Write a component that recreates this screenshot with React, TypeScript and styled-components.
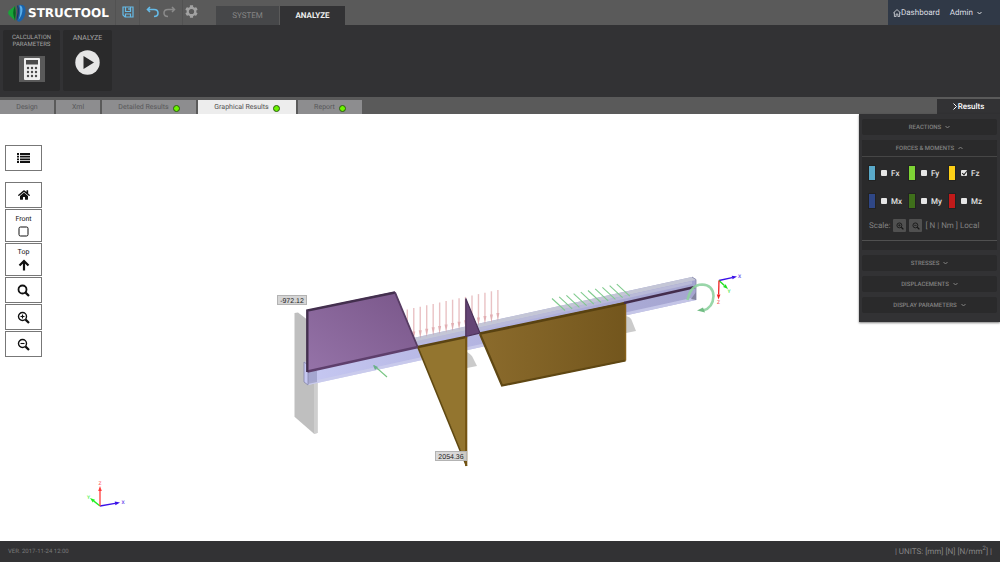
import React from "react";
import styled, { createGlobalStyle } from "styled-components";
import { FaHome, FaCog } from "react-icons/fa";

const GlobalStyle = createGlobalStyle`
  *, *::before, *::after { box-sizing: border-box; }
  body { margin: 0; background: #fff; font-family: Roboto, "Liberation Sans", sans-serif; font-size: 8px; text-rendering: geometricPrecision; }
  button { font: inherit; color: inherit; border: 0; padding: 0; background: none; cursor: pointer; text-rendering: inherit; }
  a { color: inherit; text-decoration: none; }
  svg { display: block; }
`;

const Page = styled.div`
  display: flex;
  flex-direction: column;
  min-height: 100vh;
`;

const TopBar = styled.header`
  display: flex;
  height: 25px;
  background: #5a5a5a;
`;

const Brand = styled.a`
  display: flex;
  align-items: center;
  gap: 2px;
  width: 115px;
  padding-left: 8px;
  color: #fff;
  font: bold 12px "DejaVu Sans", sans-serif;
`;

const ToolGroup = styled.div<{ $width: number }>`
  display: flex;
  align-items: center;
  justify-content: center;
  gap: 4px;
  width: ${(p) => p.$width}px;
  border-left: 1px solid #525252;
`;

const IconButton = styled.button<{ $color: string }>`
  color: ${(p) => p.$color};
  padding-bottom: 2px;
`;

const MainTabs = styled.nav`
  display: flex;
  align-items: flex-end;
  gap: 1px;
  margin-left: 17px;
`;

const MainTab = styled.button<{ $active?: boolean }>`
  width: ${(p) => (p.$active ? 65 : 63)}px;
  height: 19px;
  font-size: 8px;
  font-weight: ${(p) => (p.$active ? 700 : 400)};
  color: ${(p) => (p.$active ? "#eee" : "#858585")};
  background: ${(p) => (p.$active ? "#323234" : "#464749")};
`;

const UserArea = styled.div`
  display: flex;
  align-items: center;
  gap: 10px;
  width: 112px;
  margin-left: auto;
  padding-left: 5px;
  background: #303947;
  color: #dcdee2;
`;

const UserLink = styled.a`
  display: flex;
  align-items: center;
`;

const UserMenu = styled.button`
  display: flex;
  align-items: center;
  gap: 4px;
`;

const Ribbon = styled.div`
  display: flex;
  gap: 3px;
  height: 72px;
  padding: 5px 3px 6px;
  background: #323234;
`;

const RibbonCard = styled.button<{ $width: number }>`
  display: flex;
  flex-direction: column;
  align-items: center;
  justify-content: flex-start;
  gap: 8px;
  width: ${(p) => p.$width}px;
  padding-top: 4px;
  border-radius: 2px;
  background: #2a2a2b;
  color: #a4a4a4;
  font-size: 6px;
  line-height: 7px;
`;

const WideLabel = styled.span`
  font-size: 7px;
  line-height: 8px;
`;

const CalcTile = styled.span`
  padding: 2px 5px;
  background: #5a5a5a;
`;

const ViewTabs = styled.nav`
  display: flex;
  align-items: flex-end;
  gap: 2px;
  height: 17px;
  background: #5a5a5a;
`;

const ViewTab = styled.button<{ $width: number; $active?: boolean }>`
  display: flex;
  align-items: center;
  justify-content: center;
  gap: 4px;
  width: ${(p) => p.$width}px;
  height: 14px;
  font-size: 7px;
  background: ${(p) => (p.$active ? "#ededed" : "#8d8d8f")};
  color: ${(p) => (p.$active ? "#505050" : "#58585a")};
`;

const StatusDot = styled.i`
  width: 7px;
  height: 7px;
  margin-top: 2px;
  border: 1px solid #2c5a12;
  border-radius: 50%;
  background: #6cf500;
`;

const ResultsTab = styled.button`
  display: flex;
  align-items: center;
  justify-content: center;
  gap: 1px;
  width: 63px;
  height: 15px;
  margin-left: auto;
  background: #323234;
  color: #fff;
  font-weight: 500;
`;

const Stage = styled.main`
  position: relative;
  flex: 1;
  display: flex;
  justify-content: space-between;
  align-items: flex-start;
  min-height: 427px;
`;

const Scene = styled.svg`
  position: absolute;
  inset: 0;
  width: 100%;
  height: 100%;
`;

const ViewTools = styled.div`
  position: relative;
  display: flex;
  flex-direction: column;
  gap: 1px;
  width: 42px;
  padding: 31px 0 0 5px;
`;

const ViewTool = styled.button<{ $tall?: boolean; $apart?: boolean }>`
  display: flex;
  flex-direction: column;
  align-items: center;
  justify-content: center;
  gap: 2px;
  height: ${(p) => (p.$tall ? 33 : 26)}px;
  margin-bottom: ${(p) => (p.$apart ? 10 : 0)}px;
  border: 1px solid #777;
  background: #fff;
  color: #111;
  font-size: 7px;
  line-height: 9px;
`;

const Panel = styled.aside`
  position: relative;
  display: flex;
  flex-direction: column;
  gap: 5px;
  width: 141px;
  padding: 5px 3px 9px;
  background: #323234;
  box-shadow: 0 1px 2px rgba(0, 0, 0, 0.5);
  color: #828282;
`;

const SectionHead = styled.button`
  display: flex;
  align-items: center;
  justify-content: center;
  gap: 4px;
  width: 100%;
  height: 16px;
  border-radius: 2px;
  background: #2a2a2b;
  font-size: 6px;
  font-weight: 500;
`;

const OpenSection = styled.section`
  background: #2a2a2b;
`;

const OpenBody = styled.div`
  padding: 9px 0 9px 7px;
  border-top: 1px solid #464646;
`;

const ForceGrid = styled.div`
  display: grid;
  grid-template-columns: repeat(3, 40px);
  row-gap: 14px;
`;

const Force = styled.label`
  display: flex;
  align-items: center;
  height: 14px;
  color: #e4e4e4;
  font-weight: 500;
`;

const Swatch = styled.i<{ $color: string }>`
  width: 6px;
  height: 14px;
  margin-right: 6px;
  box-shadow: 0 0 0 1px #222;
  background: ${(p) => p.$color};
`;

const Check = styled.input`
  appearance: none;
  position: relative;
  width: 6px;
  height: 6px;
  margin: 0 4px 0 0;
  border-radius: 1px;
  background: #e6e6e6;
  &:checked::after {
    content: "";
    position: absolute;
    left: 2px;
    top: 0;
    width: 3px;
    height: 5px;
    border: solid #222;
    border-width: 0 1px 1px 0;
    transform: rotate(40deg);
  }
`;

const ScaleRow = styled.div`
  display: flex;
  align-items: center;
  gap: 3px;
  margin-top: 11px;
  padding-bottom: 8px;
  margin-left: -7px;
  padding-left: 7px;
  border-bottom: 1px solid #505050;
`;

const ScaleButton = styled.button`
  display: grid;
  place-items: center;
  width: 13px;
  height: 13px;
  border-radius: 1px;
  background: #505050;
  color: #161616;
`;

const ScaleButtons = styled.span`
  display: flex;
  gap: 3px;
`;

const Footer = styled.footer`
  display: flex;
  align-items: center;
  justify-content: space-between;
  height: 21px;
  padding: 0 8px;
  background: #323234;
  color: #858585;
`;

const Version = styled.span`
  color: #7a7a7a;
  font-size: 6px;
`;

const Units = styled.span`
  sup { font-size: 6px; line-height: 0; }
`;

function Magnifier({ sign, size = 13 }: { sign?: "+" | "-"; size?: number }) {
  return (
    <svg width={size} height={size} viewBox="0 0 13 13" fill="none" stroke="currentColor">
      <circle cx="5.5" cy="5.5" r="4" strokeWidth={sign ? 1.4 : 1.8} />
      <path d="M8.6 8.6 12 12" strokeWidth="2.2" />
      {sign && <path d="M3.5 5.5h4" strokeWidth="1.1" />}
      {sign === "+" && <path d="M5.5 3.5v4" strokeWidth="1.1" />}
    </svg>
  );
}

function Chevron({ up }: { up?: boolean }) {
  return (
    <svg width="5" height="4" viewBox="0 0 5 4" fill="none" stroke="currentColor">
      <path d={up ? "M.5 3 2.5 1l2 2" : "M.5 1l2 2 2-2"} />
    </svg>
  );
}

function Logo() {
  return (
    <svg width="18" height="20" viewBox="0 0 18 20">
      <path d="M7 3 1.5 7.2Q-1 9.5 1 12l6 5.5Q8.500 10 7 3Z" fill="#18a538" />
      <path d="M7 3Q3.500 9 7 17.500 8.500 10 7 3Z" fill="#0c5f22" />
      <path d="M10.500 2Q17 1 17.500 6 18 14 13 18 10 19.500 9 17.500 13 9 10.500 2Z" fill="#1a62a8" />
      <path d="M11.500 2.500Q14 2 14.500 6 14.500 12 10.500 17 13.500 9 11.500 2.500Z" fill="#5aaee8" />
      <path d="M10 2Q12.500 9 9 17.500 8 16 9.500 10 10 6 9 3Z" fill="#123c74" />
    </svg>
  );
}

function Calculator() {
  return (
    <svg width="16" height="22" viewBox="0 0 16 22">
      <rect width="16" height="22" rx="1" fill="#eee" />
      <rect x="2" y="2" width="12" height="4.500" fill="#4a4a4a" />
      {[10, 14, 18].map((y) =>
        [4, 8, 12].map((x) => <circle key={`${x}-${y}`} cx={x} cy={y} r="1.200" fill="#4a4a4a" />)
      )}
    </svg>
  );
}

function Axis({ x, y, tips }: { x: number; y: number; tips: { to: [number, number]; color: string; name: string; at: [number, number] }[] }) {
  return (
    <g transform={`translate(${x} ${y})`}>
      {tips.map(({ to: [tx, ty], color, name, at }) => {
        const len = Math.hypot(tx, ty);
        const ux = tx / len;
        const uy = ty / len;
        const bx = tx - ux * 5;
        const by = ty - uy * 5;
        return (
          <g key={name} fill={color}>
            <path d={`M0 0L${bx} ${by}`} stroke={color} strokeWidth="1.300" />
            <path d={`M${tx} ${ty}L${bx - uy * 1.8} ${by + ux * 1.8}L${bx + uy * 1.8} ${by - ux * 1.8}Z`} />
            <text x={at[0]} y={at[1]} fontSize="5" fontWeight="700" opacity=".7" textAnchor="middle">{name}</text>
          </g>
        );
      })}
    </g>
  );
}

const redArrows = Array.from({ length: 15 }, (_, i) => ({ x: 407.3 + 6.47 * i, top: 309.5 - 1.4 * i, tip: 341 - 1.42 * i }));
const greenLoads = Array.from({ length: 10 }, (_, i) => ({ x: 552 + 7.2 * i, y: 298.5 - 1.6 * i }));

function BeamScene() {
  return (
    <Scene viewBox="0 114 1000 427" role="img" aria-label="Shear force diagram of the beam">
      <defs>
        <linearGradient id="violet" x1="0" y1="1" x2="1" y2="0">
          <stop offset="0" stopColor="#9573a8" />
          <stop offset="1" stopColor="#795689" />
        </linearGradient>
        <linearGradient id="ochre" x1="0" x2="1">
          <stop offset="0" stopColor="#8b6b2c" />
          <stop offset="1" stopColor="#73561d" />
        </linearGradient>
        <linearGradient id="web" x1="0" x2="1">
          <stop offset="0" stopColor="#c6c8f2" />
          <stop offset=".35" stopColor="#b6b7e4" />
          <stop offset="1" stopColor="#a5a5d0" />
        </linearGradient>
      </defs>

      <path d="M294.500 313l3.500-.5 19.500 15V433l-3.500.7-19.500-17Z" fill="#bfbfbf" />
      <path d="M314 329l3.500-1V433l-3.500.7Z" fill="#cecece" />
      <path d="M467 352q5 3 6 6l4 8-10 2ZM626 316q5 1 6 5l4 10-10 2Z" fill="#cbcbcb" />

      <path d="M304 362 692 277l4 2.500V300L308 385l-4-3Z" fill="url(#web)" />
      <path d="M304 362 692 277l4 3L308 365Z" fill="#c4c6d6" />
      <path d="M308 365 692 281v3L308 368Z" fill="#b9bad8" />
      <path d="M308 382 696 297v3L308 385Z" fill="#cccdec" opacity=".8" />
      <path d="M304 362l4 3v20l-4-3ZM692 277l4 2.500V300" fill="none" stroke="#8586a8" strokeWidth=".8" />
      <path d="M308 371h9v11l-9 2Z" fill="#8385b0" opacity=".5" />
      <path d="M691 299l5-7v8Z" fill="#83849f" />

      {redArrows.map((a) => (
        <g key={a.x} opacity=".6">
          <path d={`M${a.x} ${a.top}V${a.tip - 6}`} stroke="#dc9a9e" strokeWidth="1.400" />
          <path d={`M${a.x - 1.5} ${a.tip - 8}h3L${a.x} ${a.tip}Z`} fill="#cf7b82" />
        </g>
      ))}
      {greenLoads.map((g) => (
        <path key={g.x} d={`M${g.x} ${g.y}l13 12`} stroke="#7fca8d" strokeWidth="1.100" />
      ))}
      <path d="M374 365.500 387 377" stroke="#78c583" strokeWidth="1.100" />
      <path d="M373 365l5 2-3 3Z" fill="#6bae8c" />

      <path d="M307 310 395 291.500 418 347 307.500 371.500Z" fill="url(#violet)" />
      <path d="M307.500 371.500 418 347" stroke="#5e3f6c" strokeWidth="2.400" />
      <path d="M307.300 372V310.500L395 292.500" fill="none" stroke="#432f4e" strokeWidth="2.400" />
      <path d="M395 292.300 417.500 346.500" stroke="#573c63" strokeWidth="1.800" />

      <path d="M418 347 467 336.500V466Z" fill="#93752f" />
      <path d="M418 347 467 336.800" stroke="#5b4413" strokeWidth="2.600" />
      <path d="M418 347.500 466.500 466" stroke="#60480f" strokeWidth="1.700" />
      <path d="M466.200 337v129" stroke="#745414" strokeWidth="2.200" />

      <path d="M465.800 298.500 480 333 465.800 336.500Z" fill="#644575" stroke="#4a3158" strokeWidth="1.200" />

      <path d="M480 333 625.500 302V361L502 386Z" fill="url(#ochre)" />
      <path d="M480 333.500 625.500 303" stroke="#594211" strokeWidth="2.800" />
      <path d="M480 334l22 51.500L625.500 360.500" fill="none" stroke="#5f4713" strokeWidth="2.200" />
      <path d="M625.500 302.500v58" stroke="#87601a" strokeWidth="1.500" />
      <path d="M624 303 695 287" stroke="#432d4d" strokeWidth="2.800" />

      <path d="M687.500 300Q691 284.500 702 284.500 713 285 713.500 296 713 308 703 310.500" fill="none" stroke="#8ed1a0" strokeWidth="2.600" opacity=".9" />
      <path d="M697 310.500l6-3 2 5Z" fill="#72bd84" />

      <g fontFamily="Liberation Sans, sans-serif" fontSize="7" fill="#222">
        <rect x="277.500" y="295.500" width="29" height="9" fill="#d5d5d5" stroke="#b3b3b3" />
        <text x="292" y="302.500" textAnchor="middle">-972.12</text>
        <rect x="435.500" y="451.500" width="31" height="9" fill="#d5d5d5" fillOpacity=".9" stroke="#b3b3b3" />
        <text x="451" y="458.500" textAnchor="middle">2054.36</text>
      </g>

      <Axis
        x={719}
        y={280.5}
        tips={[
          { to: [18, -4], color: "#3a10e8", name: "X", at: [20.500, -2.500] },
          { to: [9, 8.500], color: "#1fe01f", name: "Y", at: [10, 12] },
          { to: [-0.5, 19], color: "#f02020", name: "Z", at: [-0.5, 23] },
        ]}
      />
      <Axis
        x={100}
        y={506}
        tips={[
          { to: [20, -3.500], color: "#3a10e8", name: "X", at: [23, -2] },
          { to: [-10, -8], color: "#1ff01f", name: "Y", at: [-11.500, -7] },
          { to: [0, -20], color: "#ff3b3b", name: "Z", at: [0, -21] },
        ]}
      />
    </Scene>
  );
}

const forces = [
  { name: "Fx", color: "#5aa9c9" },
  { name: "Fy", color: "#7ed335" },
  { name: "Fz", color: "#fdd017", on: true },
  { name: "Mx", color: "#2f4786" },
  { name: "My", color: "#3f701b" },
  { name: "Mz", color: "#c11a1a" },
];

export default function App() {
  return (
    <Page>
      <GlobalStyle />
      <TopBar>
        <Brand href="#">
          <Logo />
          STRUCTOOL
        </Brand>
        <ToolGroup $width={24}>
          <IconButton $color="#66bbe8" aria-label="Save">
            <svg width="12" height="12" viewBox="0 0 12 12" fill="none" stroke="currentColor" strokeWidth="1.200">
              <path d="M1 1h10v10H3L1 9ZM3.500 1v4.500h5V1M7 2v2M3.500 11V8h5v3" />
            </svg>
          </IconButton>
        </ToolGroup>
        <ToolGroup $width={43}>
          <IconButton $color="#66bbe8" aria-label="Undo">
            <svg width="13" height="12" viewBox="0 0 13 12" fill="none" stroke="currentColor" strokeWidth="1.600">
              <path d="M4 1 1.500 3.500 4 6M1.500 3.500H8Q12 3.500 12 7T8 10.500" />
            </svg>
          </IconButton>
          <IconButton $color="#8b8b8b" aria-label="Redo">
            <svg width="13" height="12" viewBox="0 0 13 12" fill="none" stroke="currentColor" strokeWidth="1.500">
              <path d="M9 1l2.500 2.500L9 6M11.500 3.500H5Q1 3.500 1 7t4 3.500" />
            </svg>
          </IconButton>
        </ToolGroup>
        <ToolGroup $width={17}>
          <IconButton $color="#a2a2a2" aria-label="Settings">
            <svg width="13" height="13" viewBox="0 0 13 13">
              <FaCog size={13} />
              <circle cx="6.500" cy="6.500" r="2.600" fill="#5a5a5a" />
            </svg>
          </IconButton>
        </ToolGroup>
        <MainTabs>
          <MainTab>SYSTEM</MainTab>
          <MainTab $active>ANALYZE</MainTab>
        </MainTabs>
        <UserArea>
          <UserLink href="#">
            <svg width="8" height="8" viewBox="0 0 8 8" fill="none" stroke="currentColor" strokeWidth=".8">
              <path d="M.3 4 4 .6 7.700 4M1.400 3.400v4.200h1.700V5h1.800v2.600h1.700V3.400" />
            </svg>
            Dashboard
          </UserLink>
          <UserMenu>
            Admin <Chevron />
          </UserMenu>
        </UserArea>
      </TopBar>

      <Ribbon>
        <RibbonCard $width={57}>
          <span>CALCULATION<br />PARAMETERS</span>
          <CalcTile><Calculator /></CalcTile>
        </RibbonCard>
        <RibbonCard $width={49}>
          <WideLabel>ANALYZE</WideLabel>
          <svg width="25" height="25" viewBox="0 0 25 25">
            <circle cx="12.500" cy="12.500" r="12.200" fill="#e6e6e6" />
            <path d="M8.500 6v13L19 12.500Z" fill="#2a2a2b" />
          </svg>
        </RibbonCard>
      </Ribbon>

      <ViewTabs>
        <ViewTab $width={54}>Design</ViewTab>
        <ViewTab $width={44}>Xml</ViewTab>
        <ViewTab $width={94}>Detailed Results <StatusDot /></ViewTab>
        <ViewTab $width={98} $active>Graphical Results <StatusDot /></ViewTab>
        <ViewTab $width={64}>Report <StatusDot /></ViewTab>
        <ResultsTab>
          <svg width="4" height="7" viewBox="0 0 4 7" fill="none" stroke="currentColor">
            <path d="M.5.5l3 3-3 3" />
          </svg>
          Results
        </ResultsTab>
      </ViewTabs>

      <Stage>
        <BeamScene />
        <ViewTools>
          <ViewTool $apart aria-label="List">
            <svg width="13" height="10" viewBox="0 0 13 10" fill="currentColor">
              {[0, 2.7, 5.4, 8.1].map((y) => (
                <path key={y} d={`M0 ${y}h2v1.900h-2ZM3 ${y}h10v1.900h-10Z`} />
              ))}
            </svg>
          </ViewTool>
          <ViewTool aria-label="Home"><FaHome size={12} /></ViewTool>
          <ViewTool $tall>
            Front
            <svg width="11" height="11" viewBox="0 0 11 11" fill="none" stroke="currentColor">
              <rect x="1" y="1" width="9" height="9" rx="1.500" />
            </svg>
          </ViewTool>
          <ViewTool $tall>
            Top
            <svg width="12" height="12" viewBox="0 0 12 12" fill="none" stroke="currentColor" strokeWidth="2.200">
              <path d="M6 11.500V2M1.500 6.500 6 2l4.500 4.500" />
            </svg>
          </ViewTool>
          <ViewTool aria-label="Zoom to fit"><Magnifier /></ViewTool>
          <ViewTool aria-label="Zoom in"><Magnifier sign="+" /></ViewTool>
          <ViewTool aria-label="Zoom out"><Magnifier sign="-" /></ViewTool>
        </ViewTools>

        <Panel>
          <SectionHead>REACTIONS <Chevron /></SectionHead>
          <OpenSection>
            <SectionHead>FORCES &amp; MOMENTS <Chevron up /></SectionHead>
            <OpenBody>
              <ForceGrid>
                {forces.map((f) => (
                  <Force key={f.name}>
                    <Swatch $color={f.color} />
                    <Check type="checkbox" defaultChecked={f.on} />
                    {f.name}
                  </Force>
                ))}
              </ForceGrid>
              <ScaleRow>
                Scale:
                <ScaleButtons>
                  <ScaleButton aria-label="Increase scale"><Magnifier sign="+" size={8} /></ScaleButton>
                  <ScaleButton aria-label="Decrease scale"><Magnifier sign="-" size={8} /></ScaleButton>
                </ScaleButtons>
                [ N | Nm ] Local
              </ScaleRow>
            </OpenBody>
          </OpenSection>
          <SectionHead>STRESSES <Chevron /></SectionHead>
          <SectionHead>DISPLACEMENTS <Chevron /></SectionHead>
          <SectionHead>DISPLAY PARAMETERS <Chevron /></SectionHead>
        </Panel>
      </Stage>

      <Footer>
        <Version>VER. 2017-11-24 12:00</Version>
        <Units>| UNITS: [mm] [N] [N/mm<sup>2</sup>] |</Units>
      </Footer>
    </Page>
  );
}
